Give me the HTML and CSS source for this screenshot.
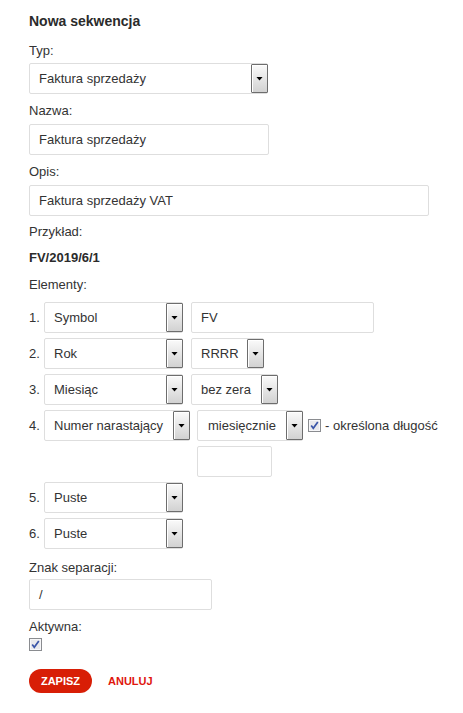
FILE: index.html
```html
<!DOCTYPE html>
<html lang="pl">
<head>
<meta charset="utf-8">
<title>Nowa sekwencja</title>
<link rel="stylesheet" href="styles.css">
</head>
<body>
<div class="page">
  <h1 class="title">Nowa sekwencja</h1>

  <div class="label label-first">Typ:</div>
  <div class="field select w-main"><span class="val">Faktura sprzedaży</span><span class="arrow"></span></div>

  <div class="label">Nazwa:</div>
  <div class="field w-nazwa">Faktura sprzedaży</div>

  <div class="label">Opis:</div>
  <div class="field w-opis">Faktura sprzedaży VAT</div>

  <div class="label label-ex">Przykład:</div>
  <div class="example">FV/2019/6/1</div>

  <div class="label label-elem">Elementy:</div>
  <div class="rows">
    <div class="row">
      <span class="num">1.</span>
      <div class="field select w-el"><span class="val">Symbol</span><span class="arrow"></span></div>
      <div class="field w-fv second">FV</div>
    </div>
    <div class="row">
      <span class="num">2.</span>
      <div class="field select w-el"><span class="val">Rok</span><span class="arrow"></span></div>
      <div class="field select w-rok second"><span class="val">RRRR</span><span class="arrow"></span></div>
    </div>
    <div class="row">
      <span class="num">3.</span>
      <div class="field select w-el"><span class="val">Miesiąc</span><span class="arrow"></span></div>
      <div class="field select w-zera second"><span class="val">bez zera</span><span class="arrow"></span></div>
    </div>
    <div class="row row4">
      <span class="num">4.</span>
      <div class="field select w-num"><span class="val">Numer narastający</span><span class="arrow"></span></div>
      <div class="row4-right">
        <div class="field select w-mies pad10"><span class="val">miesięcznie</span><span class="arrow"></span></div>
        <span class="check check-inline"><svg width="13" height="13" viewBox="0 0 13 13"><rect x="0.5" y="0.5" width="12" height="12" fill="#e9e9ec" stroke="#8a8c90"/><rect x="1.5" y="1.5" width="10" height="10" fill="none" stroke="#f7f7f9"/><path d="M3.2 6.4 L5.3 9.2 L9.8 3" fill="none" stroke="#3a55a8" stroke-width="1.7"/></svg></span>
        <span class="check-text">- określona długość</span>
      </div>
      <div class="field w-len sub"></div>
    </div>
    <div class="row">
      <span class="num">5.</span>
      <div class="field select w-el"><span class="val">Puste</span><span class="arrow"></span></div>
    </div>
    <div class="row">
      <span class="num">6.</span>
      <div class="field select w-el"><span class="val">Puste</span><span class="arrow"></span></div>
    </div>
  </div>

  <div class="label label-sep">Znak separacji:</div>
  <div class="field w-sep">/</div>

  <div class="label label-act">Aktywna:</div>
  <span class="check check-block"><svg width="13" height="13" viewBox="0 0 13 13"><rect x="0.5" y="0.5" width="12" height="12" fill="#e9e9ec" stroke="#8a8c90"/><rect x="1.5" y="1.5" width="10" height="10" fill="none" stroke="#f7f7f9"/><path d="M3.2 6.4 L5.3 9.2 L9.8 3" fill="none" stroke="#3a55a8" stroke-width="1.7"/></svg></span>

  <div class="actions">
    <span class="btn-save">ZAPISZ</span>
    <span class="btn-cancel">ANULUJ</span>
  </div>
</div>
</body>
</html>
```
FILE: styles.css
```css
body {
  margin: 0;
  font-family: "Liberation Sans", Arial, sans-serif;
  font-size: 13px;
  color: #333;
  background: #fff;
}

.page {
  padding: 13px 0 0 29px;
}

.title {
  margin: 0;
  font-size: 14px;
  line-height: 16px;
  font-weight: bold;
  color: #2b2b2b;
}

.label {
  line-height: 16px;
  margin: 9px 0 5px;
}

.label-first {
  margin-top: 14px;
  margin-bottom: 4px;
}

.label-ex {
  margin-top: 8px;
  margin-bottom: 0;
}

.example {
  font-weight: bold;
  line-height: 16px;
  margin-top: 10px;
  color: #2b2b2b;
}

.label-elem {
  margin-top: 11px;
  margin-bottom: 9px;
}

.label-sep {
  margin-top: 11px;
  margin-bottom: 3px;
}

.label-act {
  margin-top: 9px;
  margin-bottom: 3px;
}

.field {
  box-sizing: border-box;
  height: 31px;
  border: 1px solid #dedede;
  border-radius: 2px;
  display: flex;
  align-items: center;
  padding-left: 9px;
  background: #fff;
  white-space: nowrap;
}

.select .val {
  flex: 1;
}

.pad10 {
  padding-left: 10px;
}

.arrow {
  box-sizing: border-box;
  width: 17px;
  height: 29px;
  margin-right: -1px;
  border: 1px solid #6d6d6d;
  border-radius: 1px;
  background: linear-gradient(#fafafa, #d2d2d2);
  box-shadow: inset 1px 1px 0 #ffffff;
  display: flex;
  align-items: center;
  justify-content: center;
}

.arrow::after {
  content: "";
  width: 7px;
  height: 4px;
  background: #000;
  clip-path: polygon(0 0, 100% 0, 50% 100%);
}

.w-main { width: 239px; }
.w-nazwa { width: 240px; }
.w-opis { width: 400px; }
.w-el { width: 139px; }
.w-fv { width: 183px; }
.w-rok { width: 73px; }
.w-zera { width: 87px; }
.w-num { width: 146px; }
.w-mies { width: 106px; }
.w-len { width: 75px; }
.w-sep { width: 183px; }

.rows {
  display: flex;
  flex-direction: column;
  gap: 5px;
}

.row {
  display: flex;
  align-items: center;
}

.num {
  width: 15px;
  flex: none;
}

.second {
  margin-left: 8px;
}

.row4 {
  display: grid;
  grid-template-columns: 15px 146px auto;
  row-gap: 5px;
  align-items: center;
}

.row4-right {
  display: flex;
  align-items: center;
  margin-left: 7px;
}

.sub {
  grid-column: 3;
  margin-left: 7px;
}

.check {
  display: block;
  width: 13px;
  height: 13px;
}

.check svg {
  display: block;
}

.check-inline {
  margin-left: 5px;
}

.check-text {
  margin-left: 4px;
  white-space: nowrap;
}

.actions {
  display: flex;
  align-items: center;
  margin-top: 18px;
}

.btn-save {
  width: 63px;
  height: 24px;
  border-radius: 12px;
  background: #d81e06;
  color: #fff;
  font-size: 11px;
  font-weight: bold;
  display: flex;
  align-items: center;
  justify-content: center;
}

.btn-cancel {
  margin-left: 16px;
  color: #e0160c;
  font-size: 11px;
  font-weight: bold;
}
```
